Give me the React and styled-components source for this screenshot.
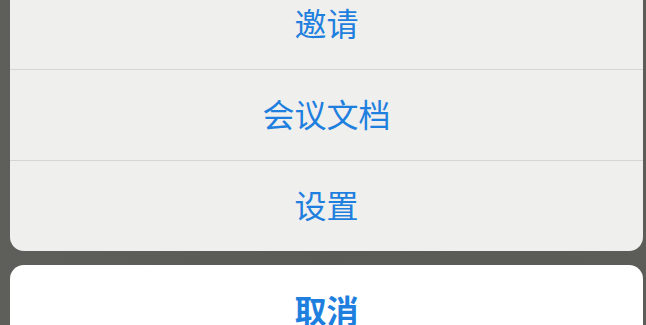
import React from "react";
import styled, { createGlobalStyle } from "styled-components";

const Global = createGlobalStyle`
  html, body {
    margin: 0;
    padding: 0;
    background: #5b5b57;
    overflow: hidden;
  }
  body {
    font-family: "Noto Sans CJK SC", "Noto Sans", sans-serif;
  }
`;

const Screen = styled.div`
  width: 646px;
  height: 325px;
  overflow: hidden;
  background: linear-gradient(90deg, #5e5e5a 0%, #5a5a56 50%, #5c5c58 100%);
`;

const Sheet = styled.div`
  margin-top: -22px;
  padding: 0 3px 0 10px;
  display: flex;
  flex-direction: column;
  gap: 14px;
`;

const Group = styled.div`
  background: ${(p) => (p.$cancel ? "#ffffff" : "#efefed")};
  border-radius: 14px;
  overflow: hidden;
  display: flex;
  flex-direction: column;
`;

const Row = styled.div`
  box-sizing: border-box;
  height: 91px;
  padding-bottom: 4px;
  display: flex;
  align-items: center;
  justify-content: center;
  color: #1e7fdf;
  font-size: 32px;
  font-weight: ${(p) => (p.$bold ? 700 : 400)};
  & + & {
    border-top: 1px solid #d5d5d3;
  }
`;

const actions = ["邀请", "会议文档", "设置"];

export default function App() {
  return (
    <>
      <Global />
      <Screen>
        <Sheet>
          <Group>
            {actions.map((a) => (
              <Row key={a}>{a}</Row>
            ))}
          </Group>
          <Group $cancel>
            <Row $bold>取消</Row>
          </Group>
        </Sheet>
      </Screen>
    </>
  );
}
